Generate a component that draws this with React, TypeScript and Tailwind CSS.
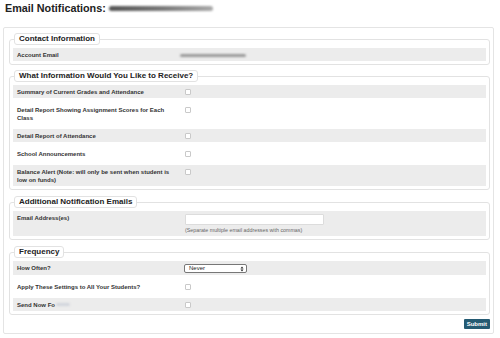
import React from 'react';

type Row = { label: string; kind?: 'check' | 'blur' | 'select' | 'email'; blurTail?: boolean };

function Checkbox() {
  return <span className="mt-[1px] block h-[6px] w-[6px] rounded-[1px] border border-[#c9c9c9] bg-white" />;
}

function Field({ row, shaded }: { row: Row; shaded: boolean }) {
  return (
    <div className={`flex items-start py-[2.5px] ${shaded ? 'bg-[#ececec]' : 'bg-white'}`}>
      <div className="w-[172px] shrink-0 pl-[4px] pr-[8px] text-[6px] font-bold leading-[8px] text-[#333]">
        {row.label}
        {row.blurTail && <span className="ml-[1px] inline-block h-[3px] w-[14px] rounded-full bg-gray-300 align-middle blur-[1px]" />}
      </div>
      {row.kind === 'check' && <Checkbox />}
      {row.kind === 'blur' && <span className="-ml-[5px] mt-[3px] block h-[3px] w-[66px] rounded-full bg-[#9a9a9a] blur-[1px]" />}
      {row.kind === 'select' && (
        <div className="relative -ml-[1px] flex h-[9px] w-[63px] items-center rounded-[2px] border border-[#777] bg-white pl-[4px] text-[6px] leading-[7px] text-[#222]">
          Never
          <svg className="absolute right-[2px] top-[1px]" width="4" height="6" viewBox="0 0 4 6">
            <path d="M0.5 2.4 L2 0.6 L3.5 2.4 Z M0.5 3.6 L2 5.4 L3.5 3.6 Z" fill="#222" />
          </svg>
        </div>
      )}
      {row.kind === 'email' && (
        <div className="flex flex-col">
          <div className="h-[11px] w-[139px] rounded-[1px] border border-[#dcdcdc] bg-white" />
          <div className="mt-[1px] text-[5.3px] leading-[8px] text-[#666]">(Separate multiple email addresses with commas)</div>
        </div>
      )}
    </div>
  );
}

function Section({ title, rows, className = '' }: { title: string; rows: Row[]; className?: string }) {
  return (
    <fieldset className={`rounded-[3px] border border-[#e2e2e2] px-[3px] pt-[3px] pb-[3px] ${className}`}>
      <legend className="ml-[1px] rounded-[3px] border border-[#e2e2e2] bg-white px-[4px] text-[8px] font-bold leading-[10px] text-[#222]">
        {title}
      </legend>
      <div className="flex flex-col gap-[5px]">
        {rows.map((r, i) => (
          <Field key={r.label} row={r} shaded={i % 2 === 0} />
        ))}
      </div>
    </fieldset>
  );
}

export default function App() {
  return (
    <div className="h-[338px] w-[500px] bg-white font-['Liberation_Sans',Arial,sans-serif]">
      <div className="flex items-center pl-[5px] pt-[1px] text-[10.8px] font-bold leading-[14px] text-[#222]">
        Email Notifications:
        <span className="ml-[3px] mt-[1px] inline-block h-[5px] w-[104px] rounded-full bg-gradient-to-r from-[#555] via-[#777] to-[#aaa] blur-[1.3px]" />
      </div>
      <div className="ml-[3px] mr-[6px] mt-[12px] rounded-[2px] border border-[#e4e4e4] pb-[4px] pl-[5px] pr-[3px] pt-[5px]">
        <Section title="Contact Information" rows={[{ label: 'Account Email', kind: 'blur' }]} />
        <Section
          className="mt-[5px]"
          title="What Information Would You Like to Receive?"
          rows={[
            { label: 'Summary of Current Grades and Attendance', kind: 'check' },
            { label: 'Detail Report Showing Assignment Scores for Each Class', kind: 'check' },
            { label: 'Detail Report of Attendance', kind: 'check' },
            { label: 'School Announcements', kind: 'check' },
            { label: 'Balance Alert (Note: will only be sent when student is low on funds)', kind: 'check' },
          ]}
        />
        <Section className="mt-[6px]" title="Additional Notification Emails" rows={[{ label: 'Email Address(es)', kind: 'email' }]} />
        <Section
          className="mt-[6px]"
          title="Frequency"
          rows={[
            { label: 'How Often?', kind: 'select' },
            { label: 'Apply These Settings to All Your Students?', kind: 'check' },
            { label: 'Send Now Fo', kind: 'check', blurTail: true },
          ]}
        />
        <div className="mt-[4px] flex justify-end">
          <button className="h-[10px] rounded-[1px] bg-[#245a72] px-[3px] text-[6px] font-bold leading-[10px] text-white">
            Submit
          </button>
        </div>
      </div>
    </div>
  );
}
